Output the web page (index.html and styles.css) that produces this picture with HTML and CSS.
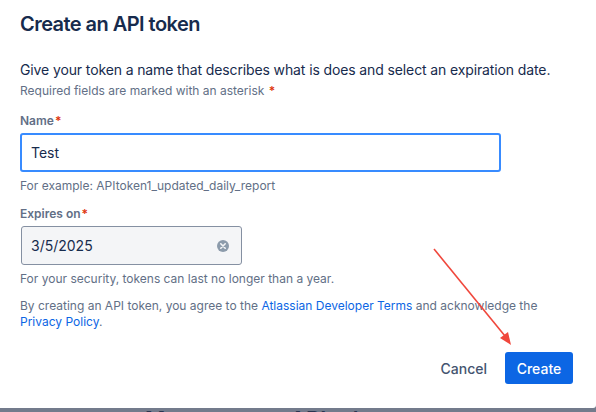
FILE: index.html
```html
<!DOCTYPE html>
<html lang="en">
<head>
<meta charset="utf-8">
<title>Create an API token</title>
<link rel="stylesheet" href="styles.css">
</head>
<body>
<div class="modal">
  <h1 class="title">Create an API token</h1>
  <p class="intro">Give your token a name that describes what is does and select an expiration date.</p>
  <p class="required-note">Required fields are marked with an asterisk <span class="star">*</span></p>

  <div class="field field-name">
    <label class="label">Name<span class="star">*</span></label>
    <div class="input input-focused">Test</div>
    <p class="helper">For example: APItoken1_updated_daily_report</p>
  </div>

  <div class="field field-date">
    <label class="label">Expires on<span class="star">*</span></label>
    <div class="input input-date">
      <span>3/5/2025</span>
      <svg class="clear" width="12" height="12" viewBox="0 0 12 12" aria-hidden="true">
        <circle cx="6" cy="6" r="6" fill="#8C9BAB"/>
        <path d="M3.8 3.8 L8.2 8.2 M8.2 3.8 L3.8 8.2" stroke="#F4F5F7" stroke-width="1.6" stroke-linecap="round"/>
      </svg>
    </div>
    <p class="helper">For your security, tokens can last no longer than a year.</p>
  </div>

  <p class="terms">By creating an API token, you agree to the <a href="#">Atlassian Developer Terms</a> and acknowledge the <a href="#">Privacy Policy</a>.</p>

  <div class="footer">
    <button class="btn btn-subtle">Cancel</button>
    <button class="btn btn-primary">Create</button>
  </div>
</div>
<div class="backdrop"><span class="bg-title">Manage your API tokens</span></div>

<svg class="annotation" width="596" height="412" viewBox="0 0 596 412" aria-hidden="true">
  <line x1="434" y1="249" x2="505" y2="336" stroke="#F0473C" stroke-width="1.6"/>
  <polygon points="511,345 500,338 508,332" fill="#F0473C"/>
</svg>
</body>
</html>
```

FILE: styles.css
```css
html, body {
  margin: 0;
  padding: 0;
}
body {
  width: 596px;
  height: 412px;
  overflow: hidden;
  background: #737B8C;
  font-family: Inter, "Noto Sans", "Liberation Sans", sans-serif;
  color: #172B4D;
  position: relative;
}
.modal {
  background: #ffffff;
  height: 408px;
  box-sizing: border-box;
  padding: 12px 20px 0 20px;
  border-bottom-right-radius: 3px;
}
.title {
  margin: 0;
  font-size: 20px;
  line-height: 24px;
  font-weight: 600;
  color: #172B4D;
  letter-spacing: -0.55px;
}
.intro {
  margin: 24px 0 0 0;
  font-size: 14px;
  line-height: 20px;
  color: #172B4D;
  letter-spacing: -0.12px;
}
.required-note {
  margin: 3px 0 0 0;
  font-size: 12px;
  line-height: 16px;
  color: #626F86;
}
.star {
  color: #DE350B;
  margin-left: 1px;
  font-weight: 600;
}
.field {
  display: flex;
  flex-direction: column;
}
.field-name {
  margin-top: 14px;
}
.field-date {
  margin-top: 12px;
}
.label {
  font-size: 12px;
  line-height: 16px;
  font-weight: 600;
  color: #626F86;
  margin-bottom: 4px;
}
.input {
  box-sizing: border-box;
  height: 39px;
  display: flex;
  align-items: center;
  font-size: 14px;
  color: #172B4D;
  border-radius: 3px;
}
.input-focused {
  width: 481px;
  border: 2px solid #388BFF;
  padding-left: 9px;
}
.input-date {
  width: 221px;
  margin-left: 1px;
  background: #F4F5F7;
  border: 1px solid #8590A2;
  padding: 0 12px 0 9px;
  justify-content: space-between;
}
.clear {
  display: block;
}
.helper {
  margin: 6px 0 0 0;
  font-size: 12px;
  line-height: 16px;
  color: #626F86;
}
.terms {
  margin: 11px 0 0 0;
  font-size: 12px;
  line-height: 16px;
  color: #626F86;
  width: 540px;
}
.terms a {
  color: #0C66E4;
  text-decoration: none;
}
.footer {
  display: flex;
  justify-content: flex-end;
  gap: 8px;
  margin-top: 22px;
  padding-right: 3px;
}
.btn {
  font-family: inherit;
  font-size: 14px;
  font-weight: 500;
  height: 32px;
  padding: 0 10px;
  border: none;
  border-radius: 3px;
  cursor: pointer;
}
.btn-subtle {
  background: transparent;
  color: #44546F;
}
.btn-primary {
  background: #0C66E4;
  color: #ffffff;
  width: 68px;
}
.backdrop {
  height: 4px;
  overflow: hidden;
  position: relative;
}
.bg-title {
  position: absolute;
  left: 145px;
  top: 0px;
  font-size: 22px;
  line-height: 22px;
  font-weight: 600;
  color: #2a3550;
}
.annotation {
  position: absolute;
  left: 0;
  top: 0;
  pointer-events: none;
}
```
